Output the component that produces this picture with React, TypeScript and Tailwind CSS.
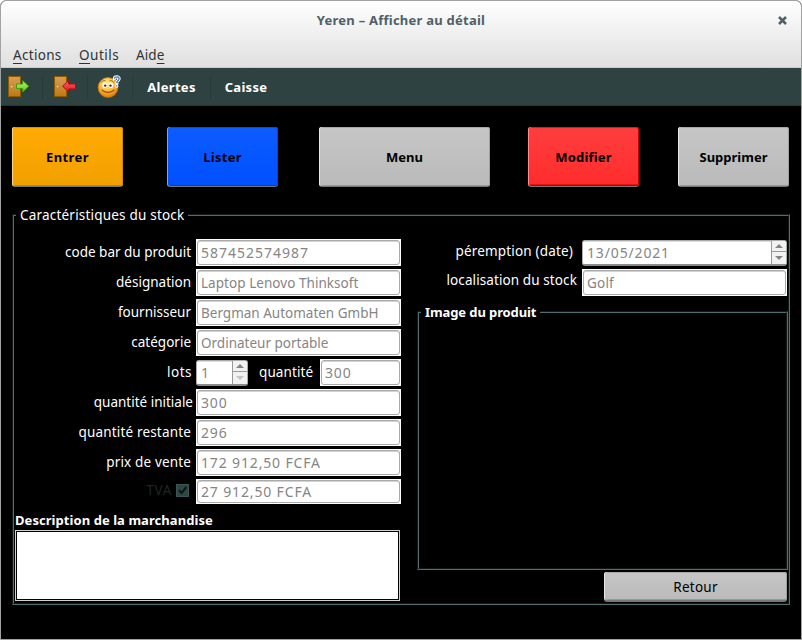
import React from "react";

function DoorIcon({ entering }: { entering?: boolean }) {
  return (
    <svg width="24" height="24" viewBox="0 0 24 24">
      <defs>
        <linearGradient id="door" x1="0" y1="0" x2="0" y2="1">
          <stop offset="0" stopColor="#d69d51" />
          <stop offset="0.6" stopColor="#c58a36" />
          <stop offset="1" stopColor="#c2780a" />
        </linearGradient>
        <linearGradient id="green" x1="0" y1="0" x2="0" y2="1">
          <stop offset="0" stopColor="#b4f56a" />
          <stop offset="1" stopColor="#67c91e" />
        </linearGradient>
        <linearGradient id="red" x1="0" y1="0" x2="0" y2="1">
          <stop offset="0" stopColor="#ff6060" />
          <stop offset="1" stopColor="#dc1c1c" />
        </linearGradient>
      </defs>
      <rect x="1.5" y="1.5" width="12" height="20" fill="url(#door)" stroke="#8f5902" />
      <circle cx="4.6" cy="11.5" r="1.5" fill="#f0c384" stroke="#a86c1c" strokeWidth=".6" />
      {entering ? (
        <path d="M9.5 11.2 15.6 5.6V9H22.5V14H15.6V16.9Z" fill="url(#red)" stroke="#b00c14" strokeLinejoin="round" />
      ) : (
        <path d="M21.8 11.2 15.7 5.6V9H9.5V13.6H15.7V16.9Z" fill="url(#green)" stroke="#459b10" strokeLinejoin="round" />
      )}
    </svg>
  );
}

function HelpFace() {
  return (
    <svg width="24" height="24" viewBox="0 0 24 24">
      <defs>
        <radialGradient id="face" cx=".45" cy=".3" r=".75">
          <stop offset="0" stopColor="#fff1a0" />
          <stop offset=".5" stopColor="#fbb83a" />
          <stop offset="1" stopColor="#de7105" />
        </radialGradient>
      </defs>
      <circle cx="11" cy="12.5" r="9.9" fill="url(#face)" stroke="#cf7806" strokeWidth=".7" />
      <path d="M4.5 7Q6 5 8.2 5.6M13 5.6Q15 5 16.5 7" fill="none" stroke="#a86408" strokeWidth=".9" strokeLinecap="round" />
      <ellipse cx="7.6" cy="10.2" rx="2.3" ry="2.7" fill="#fff" />
      <ellipse cx="14" cy="10.2" rx="2.3" ry="2.7" fill="#fff" />
      <circle cx="8.2" cy="10.6" r="1.2" fill="#303434" />
      <circle cx="13.5" cy="10.6" r="1.2" fill="#303434" />
      <path d="M5.2 15.2Q11 19.6 16.8 15.2" fill="none" stroke="#995000" strokeWidth="1.1" strokeLinecap="round" />
      <path d="M17.3 3.8Q17.5 1.7 20 1.8Q22.4 2 22 4.2Q21.7 5.5 20 6.5V8.2M19.7 10.6V11.2" fill="none" stroke="#fff" strokeWidth="3.2" strokeLinecap="round" />
      <path d="M17.3 3.8Q17.5 1.7 20 1.8Q22.4 2 22 4.2Q21.7 5.5 20 6.5V8.2M19.7 10.3V11.6" fill="none" stroke="#3a76ba" strokeWidth="1.3" />
    </svg>
  );
}

function Separator() {
  return <div className="h-6 w-px shrink-0 bg-[#293a3a]" />;
}

function ActionButton({ className, children }: { className: string; children: React.ReactNode }) {
  return (
    <button
      className={
        "h-[60px] rounded-[3px] border-b border-b-[#777] bg-linear-to-b pt-px text-[13px] font-bold text-black " + className
      }
    >
      {children}
    </button>
  );
}

const GREY = "from-[#c6c6c6] to-[#bababa] shadow-[inset_1px_0_#e8e8e8,inset_-1px_0_#a0a0a0,inset_0_1px_#a8a8a8,inset_0_-1px_#999]";
const NUM = "text-[14px] tracking-[0.85px]";

function Entry({ value, width, height = "h-[27px]", text = "" }: { value: string; width: string; height?: string; text?: string }) {
  return (
    <div className={"shrink-0 bg-white p-px " + width + " " + height}>
      <div className="flex h-full items-center rounded-[3px] border border-[#aaa] pl-[3px] text-[#858585] shadow-[inset_0_1px_#d2d2d2]">
        <span className={"whitespace-pre " + text}>{value}</span>
      </div>
    </div>
  );
}

function Spin({ value, width, downOff }: { value: string; width: string; downOff?: boolean }) {
  return (
    <div className={"mt-px flex h-[26px] shrink-0 overflow-hidden rounded-[3px] border border-b-2 border-[#aaa] border-b-[#8b8b8b] bg-white " + width}>
      <div className="flex flex-1 items-center pl-[4px] pt-px text-[#858585] shadow-[inset_0_1px_#ddd]">
        <span className={NUM}>{value}</span>
      </div>
      <div className="flex w-[15px] flex-col border-l border-[#999] bg-[#f2f2f2]">
        <div className="flex h-[11px] items-center justify-center border-b border-[#999]">
          <svg width="8" height="4" viewBox="0 0 8 4"><path d="M4 0 8 4H0Z" fill="#858585" /></svg>
        </div>
        <div className="flex flex-1 items-center justify-center">
          <svg width="8" height="4" viewBox="0 0 8 4"><path d="M4 4 8 0H0Z" fill={downOff ? "#c4c4c4" : "#858585"} /></svg>
        </div>
      </div>
    </div>
  );
}

function Row({ label, labelClass = "", children }: { label: React.ReactNode; labelClass?: string; children: React.ReactNode }) {
  return (
    <div className="flex h-[30px] items-start">
      <div className={"flex h-[25px] w-[182px] shrink-0 items-center justify-end whitespace-nowrap pr-[5px] text-white " + labelClass}>
        {label}
      </div>
      {children}
    </div>
  );
}

export default function App() {
  return (
    <div className="h-[640px] w-[802px] bg-white">
      <div className="flex h-full w-full flex-col overflow-hidden rounded-t-[6px] border border-[#a2a2a2] bg-black font-['Noto_Sans',sans-serif] text-[13.5px] leading-[20px]">
        <header className="flex h-[67px] shrink-0 flex-col border-b border-[#ccc] bg-linear-to-b from-white to-[#e0e0e0]">
          <div className="flex h-[38px] items-center">
            <div className="w-10" />
            <div className="flex-1 text-center text-[13px] font-bold tracking-[0.24px] text-[#4f6067]">Yeren – Afficher au détail</div>
            <div className="flex w-10 justify-center pl-[2px]">
              <svg width="9" height="9" viewBox="0 0 9 9"><path d="M1 1 8 8M8 1 1 8" stroke="#4f6067" strokeWidth="2.5" /></svg>
            </div>
          </div>
          <nav className="flex h-[28px] items-center pl-3 pt-[4px] text-[#2e3436]">
            <span className="w-[66px] tracking-[0.3px]"><u className="underline-offset-[3px]">A</u>ctions</span>
            <span className="w-[57px] tracking-[0.5px]"><u className="underline-offset-[3px]">O</u>utils</span>
            <span className="tracking-[0.1px]">Aid<u className="underline-offset-[3px]">e</u></span>
          </nav>
        </header>

        <div className="flex h-[38px] shrink-0 items-center border-b border-[#243535] bg-[#2f4242] pl-[6px] text-[13px] font-bold text-white">
          <DoorIcon />
          <div className="w-[11px]" />
          <Separator />
          <div className="w-[10px]" />
          <DoorIcon entering />
          <div className="w-[10px]" />
          <Separator />
          <div className="w-[9px]" />
          <HelpFace />
          <div className="w-[11px]" />
          <Separator />
          <div className="w-[77px] text-center tracking-[0.3px]">Alertes</div>
          <Separator />
          <div className="w-[70px] text-center tracking-[0.3px]">Caisse</div>
        </div>

        <main className="flex flex-1 flex-col pl-[11px] pr-[11px] pt-[21px]">
          <div className="flex h-[60px] w-[777px] shrink-0">
            <ActionButton className="w-[111px] tracking-[0.4px] from-[#ffab03] to-[#f2a000] shadow-[inset_1px_0_#ffd47c,inset_-1px_0_#d18b05,inset_0_1px_#d69208,inset_0_-1px_#c88400]">Entrer</ActionButton>
            <ActionButton className="ml-11 w-[111px] tracking-[0.3px] from-[#0d5cff] to-[#0050ff] shadow-[inset_1px_0_#7aa5ff,inset_-1px_0_#0646c8,inset_0_1px_#0b4cd0,inset_0_-1px_#0041cc]">Lister</ActionButton>
            <ActionButton className={"ml-[41px] w-[171px] " + GREY}>Menu</ActionButton>
            <ActionButton className="ml-[38px] w-[111px] tracking-[0.2px] from-[#ff3d3d] to-[#ff2c2c] shadow-[inset_1px_0_#ff8d8d,inset_-1px_0_#c80000,inset_0_1px_#c82222,inset_0_-1px_#c00000,inset_0_-2px_#f01010]">Modifier</ActionButton>
            <ActionButton className={"ml-[39px] w-[111px] " + GREY}>Supprimer</ActionButton>
          </div>

          <fieldset className="mt-[18px] h-[400px] w-[778px] shrink-0 border-2 border-[#4f6e6e] [border-style:groove]">
            <legend className="ml-[2px] h-5 px-1 tracking-[0.2px] text-white">Caractéristiques du stock</legend>
            <div className="flex">
              <section className="w-[403px] shrink-0 pt-[14px]">
                <Row label="code bar du produit"><Entry width="w-[205px]" value="587452574987" text="text-[14px] tracking-[1px]" /></Row>
                <Row label="désignation"><Entry width="w-[205px]" value="Laptop Lenovo Thinksoft" text="tracking-[0.05px]" /></Row>
                <Row label="fournisseur"><Entry width="w-[205px]" value="Bergman Automaten GmbH" /></Row>
                <Row label="catégorie"><Entry width="w-[205px]" value="Ordinateur portable" /></Row>
                <Row label="lots" labelClass="tracking-[0.5px] pr-[4px]!">
                  <Spin width="w-[52px]" value="1" downOff />
                  <div className="h-[27px] w-[72px] shrink-0 pl-[11px] pt-[3px] tracking-[0.1px] text-white">quantité</div>
                  <Entry width="w-[81px]" value="300" text={NUM} />
                </Row>
                <Row label="quantité initiale" labelClass="pr-[3px]!"><Entry width="w-[205px]" value="300" text={NUM} /></Row>
                <Row label="quantité restante" labelClass="tracking-[0.17px]"><Entry width="w-[205px]" value="296" text={NUM} /></Row>
                <Row label="prix de vente" labelClass="tracking-[0.15px]"><Entry width="w-[205px]" value="172 912,50 FCFA" text={NUM} /></Row>
                <Row
                  label={
                    <span className="flex items-center gap-[4px] pb-[3px] tracking-[0.6px] text-[#1b2727]">
                      TVA
                      <svg width="13" height="13" viewBox="0 0 13 13">
                        <rect x=".5" y=".5" width="12" height="12" fill="#2f4646" stroke="#3b5454" />
                        <path d="M3 6.2 5.6 9 10.5 3" fill="none" stroke="#0d1616" strokeWidth="2" />
                      </svg>
                    </span>
                  }
                  labelClass="pr-[7px]!"
                >
                  <Entry width="w-[205px]" height="h-[25px]" value="27 912,50 FCFA" text={NUM} />
                </Row>
                <div className="mt-[1px] h-[20px] pl-px text-[13px] font-bold tracking-[0.06px] text-white">Description de la marchandise</div>
                <div className="ml-px h-[71px] w-[385px] border border-[#d0d0d0] p-px">
                  <div className="h-full bg-white" />
                </div>
              </section>

              <section className="flex w-[371px] shrink-0 flex-col pt-[14px]">
                <div className="flex h-[30px]">
                  <div className="w-[165px] pr-[9px] pt-[2px] text-right tracking-[0.17px] text-white">péremption (date)</div>
                  <Spin width="w-[205px]" value="13/05/2021" />
                </div>
                <div className="flex h-[30px]">
                  <div className="w-[165px] pr-[5px] pt-[1px] text-right tracking-[0.1px] text-white">localisation du stock</div>
                  <Entry width="w-[205px]" value="Golf" text="tracking-[0.2px]" />
                </div>
                <fieldset className="mt-[3px] h-[268px] border-2 border-[#4f6e6e] [border-style:groove]">
                  <legend className="ml-[2px] h-5 px-1 text-[13px] font-bold tracking-[-0.1px] text-white">Image du produit</legend>
                </fieldset>
                <button className={"mt-[2px] h-[30px] w-[183px] self-end rounded-[3px] border-b-2 border-b-[#777] bg-linear-to-b pt-px text-black mr-px tracking-[0.25px] " + GREY}>
                  Retour
                </button>
              </section>
            </div>
          </fieldset>
        </main>
      </div>
    </div>
  );
}
